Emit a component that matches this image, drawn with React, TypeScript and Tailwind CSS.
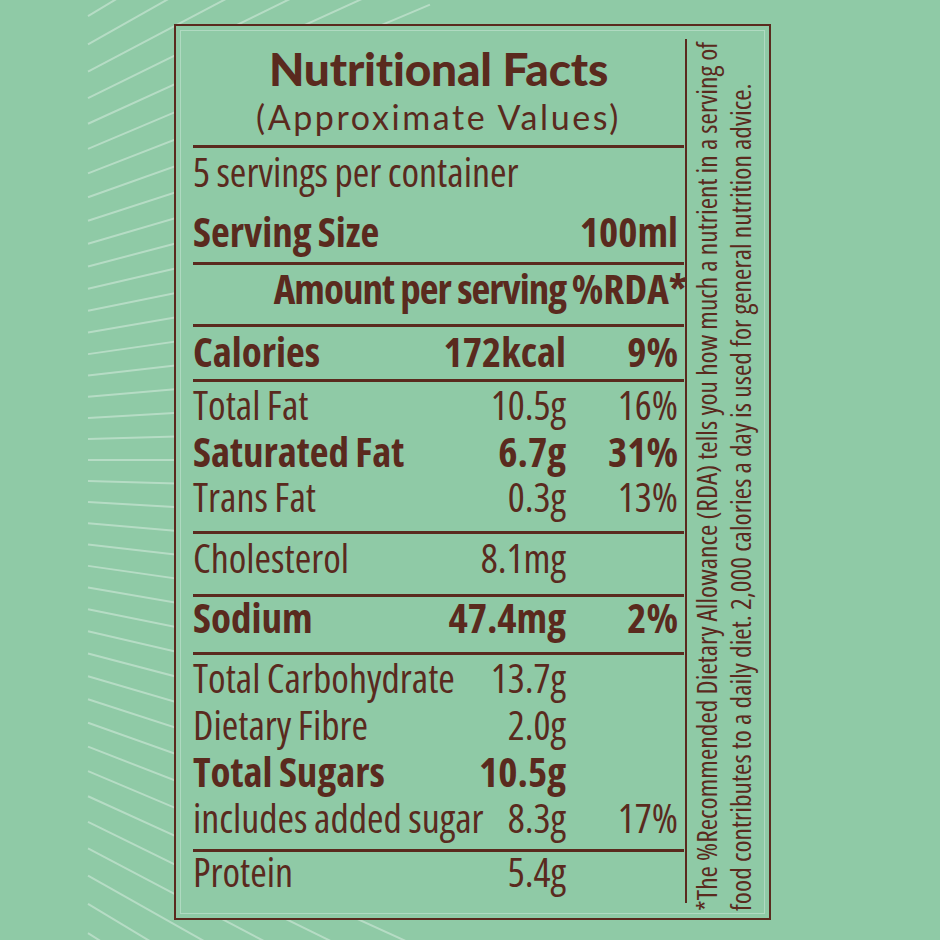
const NARROW = "[font-family:'Open_Sans',sans-serif] [font-stretch:75%]";
const ROUND = "[font-family:Lato,'Open_Sans',sans-serif]";

type Row = { name: string; amount?: string; rda?: string; bold?: boolean };

function FanLines() {
  const lines = [];
  for (let k = -24; k <= 24; k++) {
    const t = Math.tan(k * 0.0285);
    lines.push(
      <line key={k} x1={88} y1={460 + 738 * t} x2={430} y2={460 + 1080 * t} />
    );
  }
  return (
    <svg
      className="pointer-events-none absolute inset-0"
      width="940"
      height="940"
      stroke="white"
      strokeOpacity={0.35}
      strokeWidth={2}
    >
      {lines}
    </svg>
  );
}

function Divider() {
  return <div className="h-[3px] w-full bg-[#5a2a1e]" />;
}

function Line({ name, amount, rda, bold }: Row) {
  return (
    <div
      className={`flex items-baseline pr-[6px] [word-spacing:-1px] ${
        bold ? "text-[41px] font-bold" : "text-[40px]"
      }`}
    >
      <span className="flex-1 whitespace-nowrap">{name}</span>
      <span className="shrink-0 whitespace-nowrap text-right">{amount}</span>
      <span className="w-[112px] shrink-0 whitespace-nowrap text-right">{rda}</span>
    </div>
  );
}

function Section({ rows, className = "", leading = "leading-[46px]" }: { rows: Row[]; className?: string; leading?: string }) {
  return (
    <div className={`${leading} ${className}`}>
      {rows.map((r) => (
        <Line key={r.name} {...r} />
      ))}
    </div>
  );
}

export default function App() {
  return (
    <div className="relative h-[940px] w-[940px] overflow-hidden bg-[#8fcaa6] pt-[24px] text-[#5a2a1e]">
      <FanLines />
      <div className="relative ml-[174px] flex h-[896px] w-[597px] border-2 border-[#5a2a1e] bg-[#8fcaa6] shadow-[inset_0_0_0_4px_#8fcaa6,inset_0_0_0_5px_rgba(255,255,255,0.3)]">
        {/* table */}
        <div className={`w-[509px] shrink-0 pl-[17px] pr-px ${NARROW}`}>
          <div className={`pt-[20px] pb-[11px] text-center [font-stretch:100%] ${ROUND}`}>
            <div className="text-[46px] font-black leading-[46px] tracking-[-0.2px]">Nutritional Facts</div>
            <div className="mt-[8px] text-[34px] leading-[34px] tracking-[2.6px]">(Approximate Values)</div>
          </div>
          <Divider />
          <div className="pt-[1px] pb-[8px] leading-[46px]">
            <div className="text-[40px] [word-spacing:-1px]">5 servings per container</div>
            <div className="mt-[13px]">
              <Line name="Serving Size" rda="100ml" bold />
            </div>
          </div>
          <Divider />
          <div className="pb-[13px] leading-[46px]">
            <div className="flex items-baseline pr-[6px] text-[41px] font-bold">
              <span className="flex-1 whitespace-nowrap text-right tracking-[-1px]">Amount per serving</span>
              <span className="w-[112px] shrink-0 whitespace-nowrap text-right">
                %RDA<span className="-mr-[9px]">*</span>
              </span>
            </div>
          </div>
          <Divider />
          <Section className="pt-[1px] pb-[5px]" rows={[{ name: "Calories", amount: "172kcal", rda: "9%", bold: true }]} />
          <Divider />
          <Section
            className="pb-[11px]"
            rows={[
              { name: "Total Fat", amount: "10.5g", rda: "16%" },
              { name: "Saturated Fat", amount: "6.7g", rda: "31%", bold: true },
              { name: "Trans Fat", amount: "0.3g", rda: "13%" },
            ]}
          />
          <Divider />
          <Section className="pt-[1px] pb-[13px]" rows={[{ name: "Cholesterol", amount: "8.1mg" }]} />
          <Divider />
          <Section className="-mt-[3px] pb-[12px]" rows={[{ name: "Sodium", amount: "47.4mg", rda: "2%", bold: true }]} />
          <Divider />
          <Section
            className="pb-[7px]"
            leading="leading-[46.7px]"
            rows={[
              { name: "Total Carbohydrate", amount: "13.7g" },
              { name: "Dietary Fibre", amount: "2.0g" },
              { name: "Total Sugars", amount: "10.5g", bold: true },
              { name: "includes added sugar", amount: "8.3g", rda: "17%" },
            ]}
          />
          <Divider />
          <Section className="-mt-[3px]" rows={[{ name: "Protein", amount: "5.4g" }]} />
        </div>

        {/* footnote */}
        <div className="mt-[13px] mb-[15px] flex-1 border-l-2 border-[#5a2a1e] pl-[2px]">
          <div
            className={`-mt-[2px] h-[874px] rotate-180 whitespace-nowrap text-[27.6px] leading-[34px] [writing-mode:vertical-rl] ${NARROW}`}
          >
            <div>*The %Recommended Dietary Allowance (RDA) tells you how much a nutrient in a serving of</div>
            <div>food contributes to a daily diet. 2,000 calories a day is used for general nutrition advice.</div>
          </div>
        </div>
      </div>
    </div>
  );
}
